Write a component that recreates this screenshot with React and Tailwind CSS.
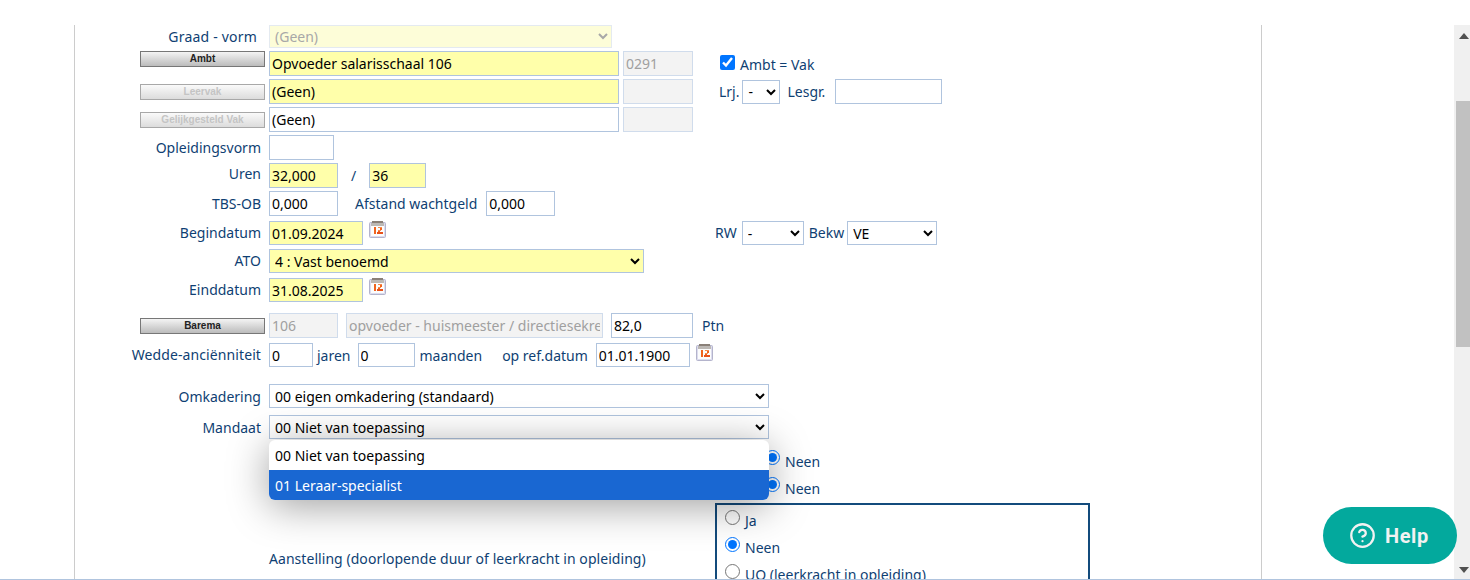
import React from 'react';
import { CircleHelp } from 'lucide-react';

const inputBase = 'block h-full border px-[2px] outline-none';
const normal = 'border-[#b0c4de] text-black';
const yellow = 'border-[#b0c4de] text-black bg-[#ffffaa]';
const disabled = 'bg-[#f3f3f3] border-[#d0dcec] text-[#a0a0a0]';

function Row({ top = '', h, label, labelClass = '', button, buttonClass = '', off, children }) {
    return (
        <div className={`flex items-center shrink-0 ${top} ${h}`}>
            <div className="w-[194px] shrink-0 h-full flex items-center justify-end">
                {label && <span className={`pr-2 text-[#0f3f73] ${labelClass}`}>{label}</span>}
                {button && <OldButton label={button} off={off} className={buttonClass} />}
            </div>
            {children}
        </div>
    );
}

function OldButton({ label, off, className }) {
    return (
        <button
            type="button"
            className={`w-[125px] h-[16px] mr-[4px] border bg-gradient-to-b font-['Liberation_Sans',sans-serif] text-[10px] leading-[12px] font-bold ${off ? 'border-[#a8a8a8] text-[#c4c4c4] from-[#fafafa] to-[#dcdcdc]' : 'border-[#777777] text-[#222222] from-[#f4f4f4] to-[#bcbcbc]'} ${className}`}
        >
            {label}
        </button>
    );
}

function CalendarIcon({ className }) {
    return (
        <svg className={className} width="18" height="18" viewBox="0 0 18 18">
            <rect x="0.5" y="2.5" width="16" height="15" rx="1" fill="#dcdcee" stroke="#b4b4cc" />
            <rect x="3" y="1" width="11" height="2" fill="#8a8078" />
            <rect x="2" y="3" width="13" height="3" fill="#bcb8b4" />
            <rect x="2" y="6" width="13" height="10" fill="#fcfcfc" />
            <rect x="5" y="7" width="2" height="7" fill="#f0641e" />
            <rect x="9" y="7" width="4" height="1" fill="#f58a50" />
            <rect x="11" y="8" width="2" height="2" fill="#f0641e" />
            <rect x="9" y="10" width="3" height="1" fill="#f58a50" />
            <rect x="9" y="11" width="2" height="1" fill="#f0641e" />
            <rect x="8" y="12" width="6" height="2" fill="#e8501a" />
        </svg>
    );
}

function RadioLine({ checked, text, textClass = 'mt-[2px]' }) {
    return (
        <label className="flex items-start h-[21px]">
            <input type="radio" defaultChecked={checked} className="w-[15px] h-[15px] m-0 shrink-0" />
            <span className={`ml-[5px] text-[#0f3f73] leading-[19px] whitespace-nowrap ${textClass}`}>{text}</span>
        </label>
    );
}

export default function App() {
    return (
        <div className="w-[1470px] h-[580px] relative overflow-hidden flex flex-col bg-white border-b border-[#b0c4de] font-['Noto_Sans',sans-serif] text-[14px] leading-[20px]">
            <div className="h-[25px] shrink-0" />

            <div className="flex-1 flex min-h-0">
                <div className="w-[74px] shrink-0" />

                <main className="w-[1188px] shrink-0 border-x border-[#cccccc] flex flex-col overflow-hidden">
                    <Row h="h-[22px]" label="Graad - vorm" labelClass="mr-[4px] mt-[1px] tracking-[0.2px]">
                        <select disabled className="w-[343px] h-[23px] border border-[#e4eaf0] bg-[#fdfdd8] text-[#a8a8a8] pl-[1px]">
                            <option>(Geen)</option>
                        </select>
                    </Row>

                    <Row top="mt-[4px]" h="h-[25px]" button="Ambt" buttonClass="-mt-[9px]">
                        <input className={`${inputBase} ${yellow} w-[350px]`} defaultValue="Opvoeder salarisschaal 106" />
                        <input disabled className={`${inputBase} ${disabled} w-[70px] ml-[4px]`} defaultValue="0291" />
                        <input type="checkbox" defaultChecked className="w-[15px] h-[15px] m-0 ml-[27px] -mt-[3px]" />
                        <span className="ml-[5px] mt-[3px] text-[#0f3f73]">Ambt = Vak</span>
                    </Row>

                    <Row top="mt-[3px]" h="h-[25px]" button="Leervak" off>
                        <input className={`${inputBase} ${yellow} w-[350px]`} defaultValue="(Geen)" />
                        <input disabled className={`${inputBase} ${disabled} w-[70px] ml-[4px]`} />
                        <span className="ml-[26px] text-[#0f3f73]">Lrj.</span>
                        <select className="ml-[3px] w-[38px] h-[24px] border border-[#b0c4de] text-black pl-[1px]">
                            <option>-</option>
                        </select>
                        <span className="ml-[7px] text-[#0f3f73]">Lesgr.</span>
                        <input className={`${inputBase} ${normal} w-[107px] ml-[10px]`} />
                    </Row>

                    <Row top="mt-[3px]" h="h-[25px]" button="Gelijkgesteld Vak" off>
                        <input className={`${inputBase} ${normal} w-[350px]`} defaultValue="(Geen)" />
                        <input disabled className={`${inputBase} ${disabled} w-[70px] ml-[4px]`} />
                    </Row>

                    <Row top="mt-[3px]" h="h-[25px]" label="Opleidingsvorm">
                        <input className={`${inputBase} ${normal} w-[65px]`} />
                    </Row>

                    <Row top="mt-[3px]" h="h-[25px]" label="Uren" labelClass="-mt-[3px]">
                        <input className={`${inputBase} ${yellow} w-[69px]`} defaultValue="32,000" />
                        <span className="ml-[13px] text-[#0f3f73]">/</span>
                        <input className={`${inputBase} ${yellow} w-[57px] ml-[13px]`} defaultValue="36" />
                    </Row>

                    <Row top="mt-[3px]" h="h-[25px]" label="TBS-OB">
                        <input className={`${inputBase} ${normal} w-[69px]`} defaultValue="0,000" />
                        <span className="ml-[17px] text-[#0f3f73]">Afstand wachtgeld</span>
                        <input className={`${inputBase} ${normal} w-[69px] ml-[9px]`} defaultValue="0,000" />
                    </Row>

                    <Row top="mt-[5px]" h="h-[24px]" label="Begindatum">
                        <input className={`${inputBase} ${yellow} w-[94px]`} defaultValue="01.09.2024" />
                        <CalendarIcon className="ml-[6px] -mt-[8px]" />
                        <span className="ml-[328px] text-[#0f3f73]">RW</span>
                        <select className="ml-[5px] w-[62px] h-[24px] border border-[#b0c4de] text-black pl-[1px]">
                            <option>-</option>
                        </select>
                        <span className="ml-[5px] text-[#0f3f73]">Bekw</span>
                        <select className="ml-[3px] w-[90px] h-[24px] border border-[#b0c4de] text-black pl-[1px]">
                            <option>VE</option>
                        </select>
                    </Row>

                    <Row top="mt-[4px]" h="h-[24px]" label="ATO">
                        <select className="w-[375px] h-[24px] border border-[#b0c4de] bg-[#ffffaa] text-black pl-[1px]">
                            <option>4 : Vast benoemd</option>
                        </select>
                    </Row>

                    <Row top="mt-[5px]" h="h-[24px]" label="Einddatum" labelClass="-mt-[1px]">
                        <input className={`${inputBase} ${yellow} w-[94px]`} defaultValue="31.08.2025" />
                        <CalendarIcon className="ml-[6px] -mt-[8px]" />
                    </Row>

                    <Row top="mt-[11px]" h="h-[25px]" button="Barema">
                        <input disabled className={`${inputBase} ${disabled} w-[69px]`} defaultValue="106" />
                        <input disabled className={`${inputBase} ${disabled} w-[257px] ml-[8px]`} defaultValue="opvoeder - huismeester / directiesekretaris" />
                        <input className={`${inputBase} ${normal} w-[82px] ml-[8px]`} defaultValue="82,0" />
                        <span className="ml-[9px] text-[#0f3f73]">Ptn</span>
                    </Row>

                    <Row top="mt-[5px]" h="h-[24px]" label="Wedde-anciënniteit" labelClass="tracking-[0.1px]">
                        <input className={`${inputBase} ${normal} w-[44px]`} defaultValue="0" />
                        <span className="ml-[4px] mt-[2px] text-[#0f3f73]">jaren</span>
                        <input className={`${inputBase} ${normal} w-[57px] ml-[7px]`} defaultValue="0" />
                        <span className="ml-[5px] mt-[2px] text-[#0f3f73]">maanden</span>
                        <span className="ml-[20px] mt-[2px] text-[#0f3f73]">op ref.datum</span>
                        <input className={`${inputBase} ${normal} w-[94px] ml-[8px]`} defaultValue="01.01.1900" />
                        <CalendarIcon className="ml-[6px] -mt-[7px]" />
                    </Row>

                    <Row top="mt-[17px]" h="h-[24px]" label="Omkadering" labelClass="mt-[2px]">
                        <select className="w-[500px] h-[24px] border border-[#b0c4de] text-black pl-[1px]">
                            <option>00 eigen omkadering (standaard)</option>
                        </select>
                    </Row>

                    <Row top="mt-[7px] relative z-10" h="h-[24px]" label="Mandaat" labelClass="mt-[1px]">
                        <select className="w-[500px] h-[24px] border border-[#b0c4de] text-black pl-[1px]">
                            <option>00 Niet van toepassing</option>
                        </select>
                        {/* open keuzelijst */}
                        <div className="absolute left-[194px] top-[25px] w-[500px] rounded-[6px] overflow-hidden bg-white shadow-[0_6px_40px_rgba(0,0,0,0.38)] text-black">
                            <div className="h-[30px] pl-[6px] pt-[1px] flex items-center">00 Niet van toepassing</div>
                            <div className="h-[30px] pl-[6px] pt-[1px] flex items-center bg-[#1967d2] text-white">01 Leraar-specialist</div>
                        </div>
                    </Row>

                    <div className="ml-[690px] mt-[11px] shrink-0 flex flex-col gap-[6px]">
                        <RadioLine checked text="Neen" />
                        <RadioLine checked text="Neen" />
                    </div>

                    <div className="flex items-center mt-[5px] shrink-0">
                        <span className="ml-[194px] w-[446px] shrink-0 text-[#0f3f73] tracking-[0.05px]">Aanstelling (doorlopende duur of leerkracht in opleiding)</span>
                        <div className="w-[375px] h-[112px] shrink-0 border-2 border-[#134b7c] pl-[8px] pt-[5px] flex flex-col gap-[6px]">
                            <RadioLine text="Ja" textClass="mt-[1px]" />
                            <RadioLine checked text="Neen" textClass="mt-[1px]" />
                            <RadioLine text="UO (leerkracht in opleiding)" textClass="mt-[1px]" />
                        </div>
                    </div>
                </main>

                <div className="flex-1" />

                {/* scrollbar */}
                <div className="w-[16px] shrink-0 bg-[#f0f0f0] flex flex-col items-end">
                    <svg className="mt-[8px] mr-[1px]" width="10" height="6" viewBox="0 0 10 6"><path d="M5 0l5 6H0z" fill="#505050" /></svg>
                    <div className="w-[14px] h-[246px] mt-[62px] bg-[#c1c1c1]" />
                    <svg className="mt-auto mb-[6px] mr-[1px]" width="10" height="6" viewBox="0 0 10 6"><path d="M5 6l5-6H0z" fill="#505050" /></svg>
                </div>
            </div>

            <button
                type="button"
                className="absolute left-[1323px] top-[507px] w-[134px] h-[57px] rounded-full bg-[#03a99d] text-[#f2f2f2] flex items-center pl-[26px] gap-[9px] font-['Roboto',sans-serif] font-bold text-[20px] tracking-[0.6px]"
            >
                <CircleHelp size={27} strokeWidth={2} />
                Help
            </button>
        </div>
    );
}
